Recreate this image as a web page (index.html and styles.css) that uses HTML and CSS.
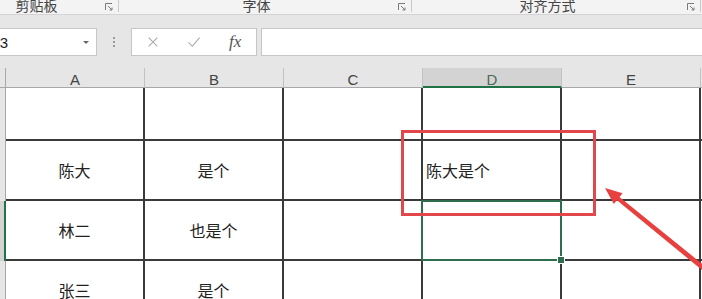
FILE: index.html
```html
<!DOCTYPE html>
<html lang="zh-CN">
<head>
  <meta charset="UTF-8">
  <meta name="viewport" content="width=device-width, initial-scale=1.0">
  <title>表格 - 合并单元格</title>
  <link rel="stylesheet" href="styles.css">
</head>
<body>
  <div class="ribbon">
    <div class="group group-clip">
      <span class="group-label">剪贴板</span>
      <svg class="launcher" viewBox="0 0 8 8"><path d="M0.5 7V0.5H7" /><path d="M3 3L7 7M7 4.5V7H4.5" /></svg>
    </div>
    <div class="group group-font">
      <span class="group-label">字体</span>
      <svg class="launcher" viewBox="0 0 8 8"><path d="M0.5 7V0.5H7" /><path d="M3 3L7 7M7 4.5V7H4.5" /></svg>
    </div>
    <div class="group group-align">
      <span class="group-label">对齐方式</span>
      <svg class="launcher" viewBox="0 0 8 8"><path d="M0.5 7V0.5H7" /><path d="M3 3L7 7M7 4.5V7H4.5" /></svg>
    </div>
  </div>

  <div class="formula-bar">
    <div class="name-box">
      <span class="name-text">D3</span>
      <span class="name-arrow"></span>
    </div>
    <div class="grip"><i></i><i></i><i></i></div>
    <div class="fx-buttons">
      <svg class="fx-icon" viewBox="0 0 14 14"><path d="M2 2L12 12M12 2L2 12" /></svg>
      <svg class="fx-icon" viewBox="0 0 16 14"><path d="M1.5 7.5L6 12L14.5 2" /></svg>
      <span class="fx-label">fx</span>
    </div>
    <div class="formula-input"></div>
  </div>

  <div class="sheet">
    <div class="corner"></div>
    <div class="col-head">A</div>
    <div class="col-head">B</div>
    <div class="col-head">C</div>
    <div class="col-head active">D</div>
    <div class="col-head">E</div>
    <div class="col-head edge"></div>

    <div class="row-head"></div>
    <div class="cell"></div>
    <div class="cell"></div>
    <div class="cell"></div>
    <div class="cell"></div>
    <div class="cell"></div>
    <div class="cell edge"></div>

    <div class="row-head"></div>
    <div class="cell center">陈大</div>
    <div class="cell center">是个</div>
    <div class="cell"></div>
    <div class="cell">陈大是个</div>
    <div class="cell"></div>
    <div class="cell edge"></div>

    <div class="row-head active"></div>
    <div class="cell center">林二</div>
    <div class="cell center">也是个</div>
    <div class="cell"></div>
    <div class="cell"></div>
    <div class="cell"></div>
    <div class="cell edge"></div>

    <div class="row-head"></div>
    <div class="cell center">张三</div>
    <div class="cell center">是个</div>
    <div class="cell"></div>
    <div class="cell"></div>
    <div class="cell"></div>
    <div class="cell edge"></div>

    <!-- active cell D3 -->
    <div class="selection"><span class="fill-handle"></span></div>

    <!-- red annotation drawn over the sheet -->
    <svg class="annotation" viewBox="0 68 702 231">
      <rect x="402.5" y="131.5" width="192" height="83" />
      <polygon points="605,188 622.6,193.3 619.5,197.1 713.6,273.1 710.4,276.9 616.9,200.3 613.8,204.1" />
    </svg>
  </div>
</body>
</html>
```

FILE: styles.css
```css
html, body {
  margin: 0;
  padding: 0;
}

body {
  width: 702px;
  height: 299px;
  overflow: hidden;
  background-color: #e6e6e6;
  font-family: "Noto Sans CJK SC", "Liberation Sans", sans-serif;
}

/* ribbon group labels, cut at the top */
.ribbon {
  display: flex;
  height: 14px;
  background-color: #f3f3f3;
  border-bottom: 1px solid #d4d4d4;
  overflow: hidden;
}

.group {
  display: flex;
  align-items: flex-start;
  border-right: 1px solid #c8c8c8;
  height: 12px;
  box-sizing: border-box;
  padding-right: 5px;
}

.group-clip {
  width: 147px;
  margin-left: -28px;
}

.group-font {
  width: 293px;
}

.group-align {
  width: 289px;
}

.group-label {
  flex: 1;
  text-align: center;
  font-size: 14px;
  line-height: 14px;
  margin-top: -2px;
  color: #444;
}

.launcher {
  width: 8px;
  height: 8px;
  margin-top: 3px;
  margin-left: 4px;
  fill: none;
  stroke: #7a7a7a;
  stroke-width: 1;
}

/* formula bar */
.formula-bar {
  display: flex;
  height: 28px;
  margin-top: 13px;
}

.name-box {
  width: 98px;
  margin-left: -1px;
  box-sizing: border-box;
  border: 1px solid #c6c6c6;
  background-color: #fff;
  display: flex;
  align-items: center;
  overflow: hidden;
}

.name-text {
  flex: 1;
  margin-left: -11px;
  margin-top: 1px;
  font-family: "Liberation Sans", sans-serif;
  font-size: 15px;
  color: #222;
}

.name-arrow {
  width: 0;
  height: 0;
  margin-right: 7px;
  margin-top: 1px;
  border-left: 3px solid transparent;
  border-right: 3px solid transparent;
  border-top: 3px solid #666;
}

.grip {
  width: 34px;
  display: flex;
  flex-direction: column;
  align-items: center;
  justify-content: center;
  gap: 2px;
}

.grip i {
  width: 2px;
  height: 2px;
  background-color: #9a9a9a;
}

.fx-buttons {
  width: 126px;
  box-sizing: border-box;
  border: 1px solid #c6c6c6;
  background-color: #fff;
  display: flex;
  align-items: center;
  padding-left: 14px;
  gap: 27px;
}

.fx-icon {
  width: 14px;
  height: 12px;
  fill: none;
  stroke: #aaa;
  stroke-width: 1.3;
}

.fx-label {
  font-family: "Liberation Serif", serif;
  font-style: italic;
  font-size: 17px;
  color: #555;
  margin-left: 1px;
}

.formula-input {
  flex: 1;
  margin-left: 4px;
  margin-right: -2px;
  box-sizing: border-box;
  border: 1px solid #c6c6c6;
  background-color: #fff;
}

/* worksheet */
.sheet {
  position: relative;
  margin-top: 12px;
  display: grid;
  grid-template-columns: 6px repeat(5, 139px) 1fr;
  grid-template-rows: 20px 53px 60px 60px 60px;
  background-color: #fff;
}

.corner {
  background-color: #e6e6e6;
  border-right: 1px solid #a8a8a8;
  border-bottom: 1px solid #a8a8a8;
  box-sizing: border-box;
}

.col-head {
  background-color: #e6e6e6;
  border-right: 1px solid #c2c2c2;
  border-bottom: 1px solid #a8a8a8;
  box-sizing: border-box;
  font-family: "Liberation Sans", sans-serif;
  font-size: 15px;
  line-height: 20px;
  padding-top: 2px;
  text-align: center;
  color: #444;
}

.col-head.active {
  background-color: #d3d3d3;
  border-bottom: 2px solid #217346;
  color: #4c6b58;
}

.col-head.edge {
  border-right: none;
}

.row-head {
  background-color: #e6e6e6;
  border-right: 1px solid #a8a8a8;
  box-sizing: border-box;
}

.row-head.active {
  background-color: #d3d3d3;
  border-right: 2px solid #217346;
}

.cell {
  border-right: 2px solid #3a3a3a;
  border-bottom: 2px solid #3a3a3a;
  box-sizing: border-box;
  display: flex;
  align-items: center;
  padding-left: 3px;
  font-size: 16px;
  color: #222;
}

.cell.center {
  justify-content: center;
  padding-left: 0;
}

.cell.edge {
  border-right: none;
}

.selection {
  position: absolute;
  left: 421px;
  top: 132px;
  width: 141px;
  height: 61px;
  box-sizing: border-box;
  border: 2px solid #2e6e4f;
}

.fill-handle {
  position: absolute;
  right: -5px;
  bottom: -5px;
  width: 6px;
  height: 6px;
  background-color: #2e6e4f;
  border: 1px solid #fff;
}

.annotation {
  position: absolute;
  left: 0;
  top: 0;
  width: 702px;
  height: 231px;
  pointer-events: none;
}

.annotation rect {
  fill: none;
  stroke: #e2474b;
  stroke-width: 3;
}

.annotation polygon {
  fill: #e8403f;
}
```
